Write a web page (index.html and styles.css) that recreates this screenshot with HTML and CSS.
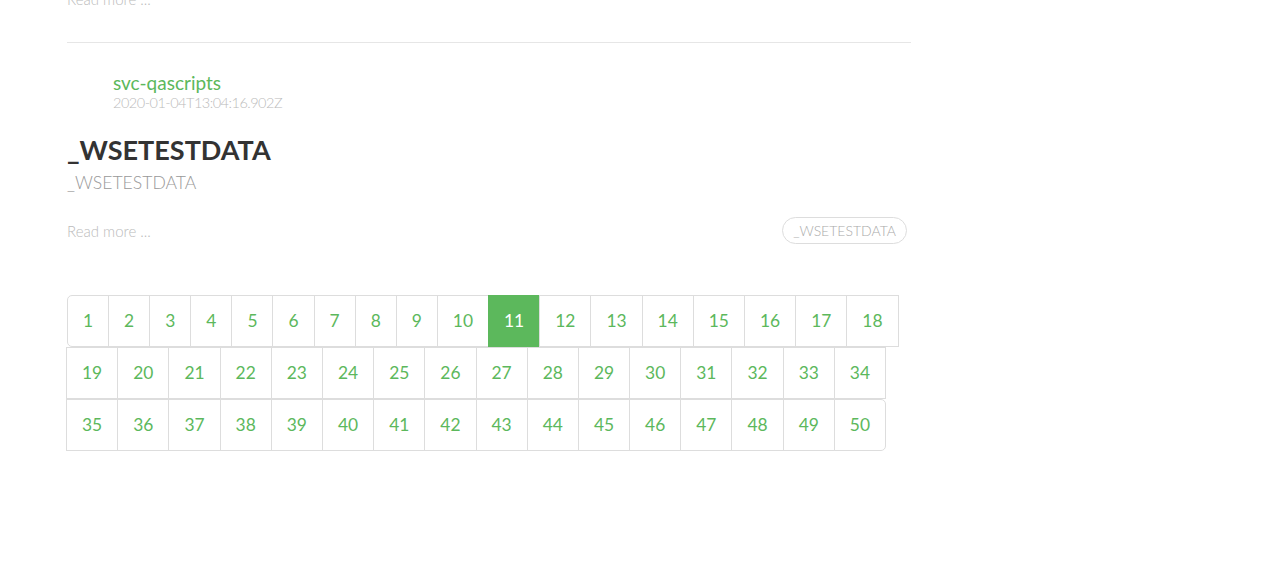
FILE: index.html
```html
<!DOCTYPE html>
<html lang="en">
<head>
<meta charset="utf-8">
<title>Articles</title>
<link rel="stylesheet" href="styles.css">
</head>
<body>
<div class="feed">
  <div class="preview preview-first">
    <div class="preview-foot">
      <span class="read-more">Read more ...</span>
    </div>
  </div>
  <div class="preview preview-bordered">
    <div class="meta">
      <span class="avatar"></span>
      <div class="info">
        <a class="author" href="#">svc-qascripts</a>
        <span class="date">2020-01-04T13:04:16.902Z</span>
      </div>
    </div>
    <h1 class="title">_WSETESTDATA</h1>
    <p class="desc">_WSETESTDATA</p>
    <div class="preview-foot">
      <span class="read-more">Read more ...</span>
      <ul class="tag-list">
        <li class="tag-pill">_WSETESTDATA</li>
      </ul>
    </div>
  </div>
  <ul class="pagination">
    <li class="page-item"><a class="page-link first" href="#">1</a></li>
    <li class="page-item"><a class="page-link" href="#">2</a></li>
    <li class="page-item"><a class="page-link" href="#">3</a></li>
    <li class="page-item"><a class="page-link" href="#">4</a></li>
    <li class="page-item"><a class="page-link" href="#">5</a></li>
    <li class="page-item"><a class="page-link" href="#">6</a></li>
    <li class="page-item"><a class="page-link" href="#">7</a></li>
    <li class="page-item"><a class="page-link" href="#">8</a></li>
    <li class="page-item"><a class="page-link" href="#">9</a></li>
    <li class="page-item"><a class="page-link" href="#">10</a></li>
    <li class="page-item"><a class="page-link active" href="#">11</a></li>
    <li class="page-item"><a class="page-link" href="#">12</a></li>
    <li class="page-item"><a class="page-link" href="#">13</a></li>
    <li class="page-item"><a class="page-link" href="#">14</a></li>
    <li class="page-item"><a class="page-link" href="#">15</a></li>
    <li class="page-item"><a class="page-link" href="#">16</a></li>
    <li class="page-item"><a class="page-link" href="#">17</a></li>
    <li class="page-item"><a class="page-link" href="#">18</a></li>
    <li class="page-item"><a class="page-link" href="#">19</a></li>
    <li class="page-item"><a class="page-link" href="#">20</a></li>
    <li class="page-item"><a class="page-link" href="#">21</a></li>
    <li class="page-item"><a class="page-link" href="#">22</a></li>
    <li class="page-item"><a class="page-link" href="#">23</a></li>
    <li class="page-item"><a class="page-link" href="#">24</a></li>
    <li class="page-item"><a class="page-link" href="#">25</a></li>
    <li class="page-item"><a class="page-link" href="#">26</a></li>
    <li class="page-item"><a class="page-link" href="#">27</a></li>
    <li class="page-item"><a class="page-link" href="#">28</a></li>
    <li class="page-item"><a class="page-link" href="#">29</a></li>
    <li class="page-item"><a class="page-link" href="#">30</a></li>
    <li class="page-item"><a class="page-link" href="#">31</a></li>
    <li class="page-item"><a class="page-link" href="#">32</a></li>
    <li class="page-item"><a class="page-link" href="#">33</a></li>
    <li class="page-item"><a class="page-link" href="#">34</a></li>
    <li class="page-item"><a class="page-link" href="#">35</a></li>
    <li class="page-item"><a class="page-link" href="#">36</a></li>
    <li class="page-item"><a class="page-link" href="#">37</a></li>
    <li class="page-item"><a class="page-link" href="#">38</a></li>
    <li class="page-item"><a class="page-link" href="#">39</a></li>
    <li class="page-item"><a class="page-link" href="#">40</a></li>
    <li class="page-item"><a class="page-link" href="#">41</a></li>
    <li class="page-item"><a class="page-link" href="#">42</a></li>
    <li class="page-item"><a class="page-link" href="#">43</a></li>
    <li class="page-item"><a class="page-link" href="#">44</a></li>
    <li class="page-item"><a class="page-link" href="#">45</a></li>
    <li class="page-item"><a class="page-link" href="#">46</a></li>
    <li class="page-item"><a class="page-link" href="#">47</a></li>
    <li class="page-item"><a class="page-link" href="#">48</a></li>
    <li class="page-item"><a class="page-link" href="#">49</a></li>
    <li class="page-item"><a class="page-link last" href="#">50</a></li>
  </ul>
</div>
</body>
</html>
```

FILE: styles.css
```css
html, body {
  margin: 0;
  padding: 0;
  background: #fff;
}

body {
  font-family: Lato, "Noto Sans", "Liberation Sans", sans-serif;
  color: #373a3c;
  overflow: hidden;
}

.feed {
  width: 844px;
  margin-left: 67px;
}

.preview {
  padding-bottom: 30px;
}

.preview-first {
  margin-top: -15px;
}

.preview-bordered {
  border-top: 1px solid #e6e6e6;
  padding-top: 30px;
}

.preview-foot {
  display: flex;
  justify-content: space-between;
  align-items: center;
  min-height: 27px;
}

.read-more {
  font-size: 15px;
  line-height: 20px;
  font-weight: 300;
  color: #bbb;
}

.meta {
  display: flex;
  align-items: center;
  margin-bottom: 20px;
}

.avatar {
  display: block;
  width: 40px;
  height: 40px;
  margin-right: 6px;
}

.info {
  display: flex;
  flex-direction: column;
  line-height: 20px;
}

.author {
  font-size: 19px;
  color: #5cb85c;
  text-decoration: none;
}

.date {
  font-size: 14.5px;
  letter-spacing: -0.5px;
  color: #bbb;
  font-weight: 300;
}

.title {
  margin: 0 0 4px;
  font-size: 27px;
  line-height: 33px;
  font-weight: 700;
  color: #333;
}

.desc {
  margin: 0 0 21px;
  font-size: 17.6px;
  line-height: 26px;
  font-weight: 300;
  color: #999;
}

.tag-list {
  list-style: none;
  margin: 0 4px 0 0;
  padding: 0;
  display: flex;
}

.tag-pill {
  font-size: 14px;
  line-height: 19px;
  font-weight: 300;
  color: #aaa;
  border: 1px solid #ddd;
  border-radius: 200px;
  padding: 3px 10px;
}

.pagination {
  list-style: none;
  margin: 21px 0 0;
  padding: 0;
  display: flex;
  flex-wrap: wrap;
}

.page-item {
  display: block;
}

.page-link {
  display: block;
  margin-left: -1px;
  padding: 10px 15px;
  font-size: 17.4px;
  line-height: 30px;
  color: #5cb85c;
  text-decoration: none;
  border: 1px solid #ddd;
  background: #fff;
}

.page-link.first {
  margin-left: 0;
  border-radius: 5px 0 0 5px;
}

.page-link.last {
  border-radius: 0 5px 5px 0;
}

.page-link.active {
  background: #5cb85c;
  border-color: #5cb85c;
  color: #fff;
}
```
